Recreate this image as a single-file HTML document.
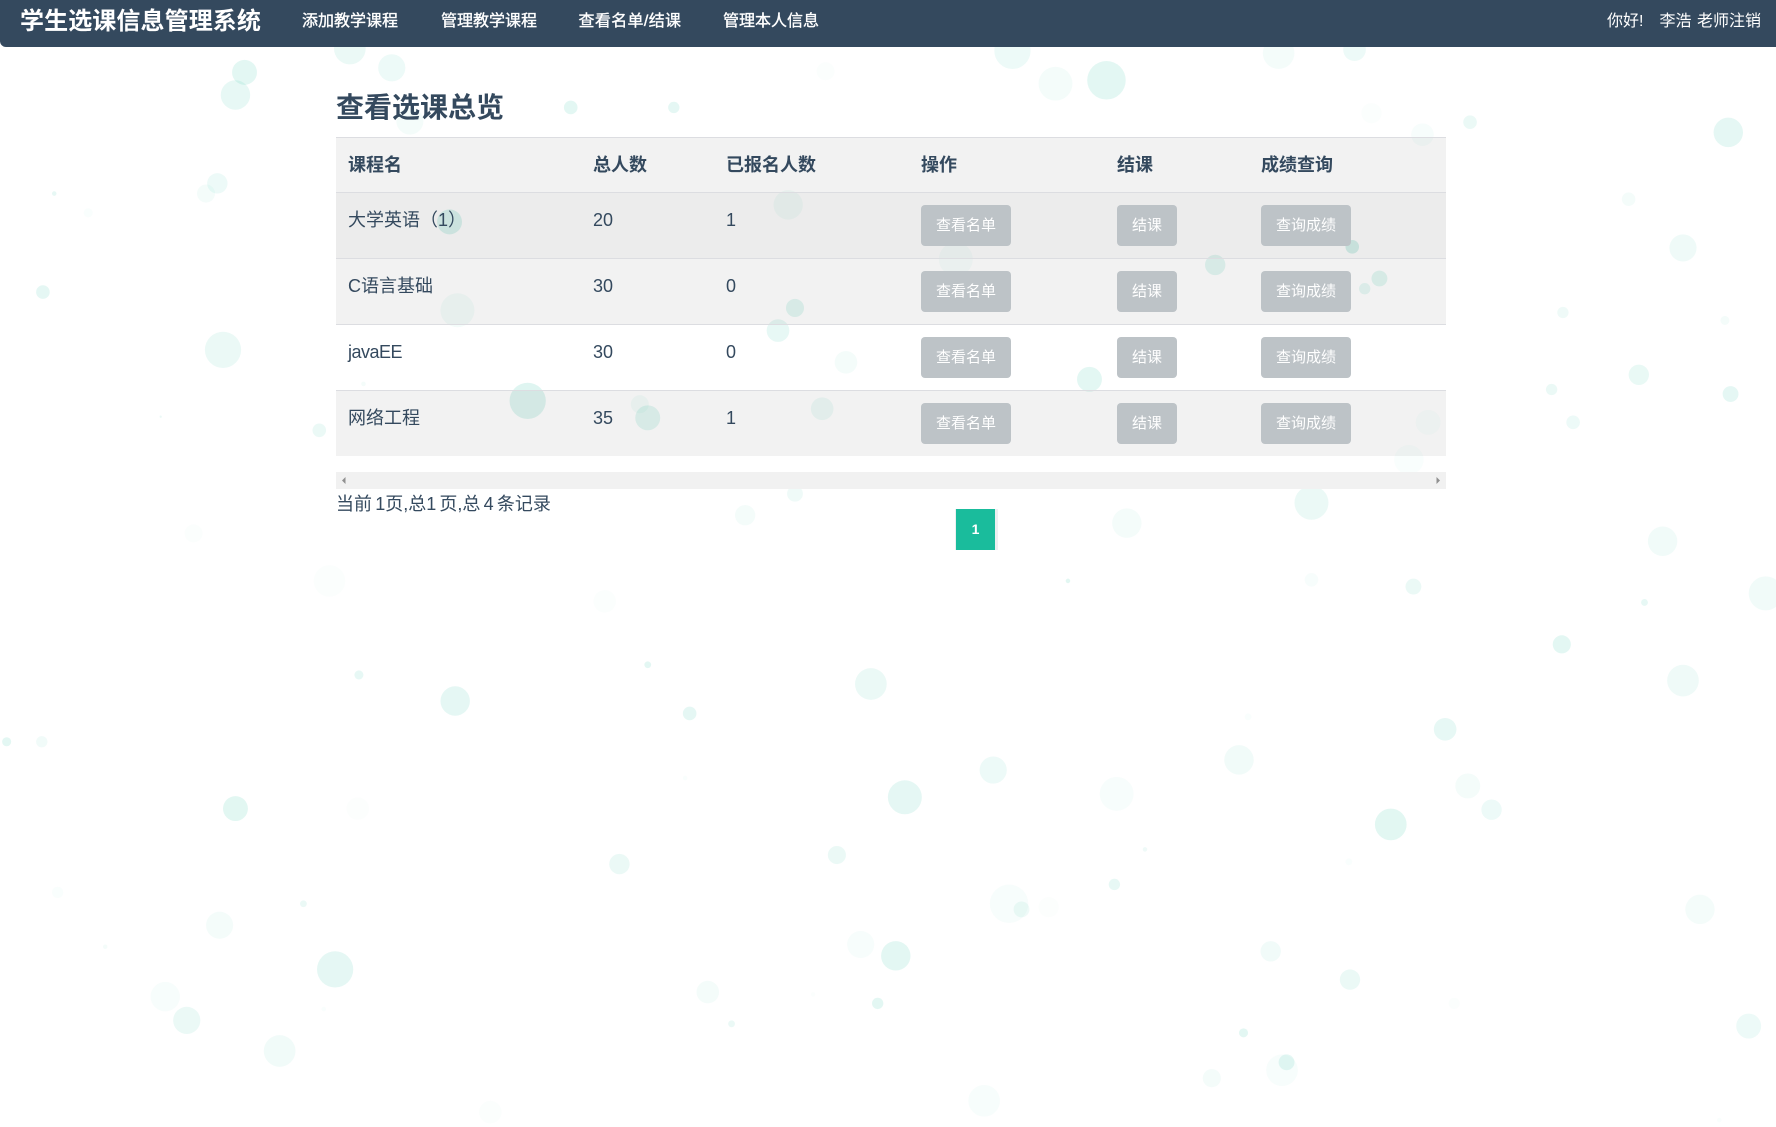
<!DOCTYPE html>
<html lang="zh"><head><meta charset="utf-8"><title>查看选课总览</title>
<style>
*{box-sizing:border-box}
html,body{margin:0;padding:0;width:1776px;height:1127px;overflow:hidden;background:#fff}
body{position:relative;font-family:"Liberation Sans","Noto Sans CJK SC",sans-serif;color:#34495e}
.a{position:absolute;white-space:nowrap}
#bg{position:absolute;left:.6px;top:.6px;width:1776px;height:1127px;opacity:.86}
nav{position:absolute;left:0;top:0;width:1776px;height:47px;background:#34495e;border-radius:0 0 0 6px;color:#fff}
nav .a{line-height:40px;top:0}
.l{font-size:16px;-webkit-text-stroke:.35px #fff}
.r{position:absolute;left:336px;width:1110px}
.t{font-size:18px;line-height:26px}
.h{font-size:18px;line-height:26px;font-weight:700}
.b{position:absolute;height:41px;background:#bdc3c7;color:#fff;border-radius:4px;font-size:15px;line-height:42px;text-align:center}
</style></head><body>
<svg id="bg" viewBox="0 0 1568 995" fill="#1abc9c">
<circle cx="308" cy="42" r="14" fill-opacity=".1"/><circle cx="345" cy="59" r="12" fill-opacity=".09"/><circle cx="215" cy="63" r="11" fill-opacity=".14"/><circle cx="207" cy="83" r="13" fill-opacity=".12"/><circle cx="361" cy="106" r="12" fill-opacity=".05"/><circle cx="503" cy="94" r="6" fill-opacity=".14"/><circle cx="594" cy="94" r="5" fill-opacity=".13"/><circle cx="728" cy="62" r="8" fill-opacity=".02"/><circle cx="893" cy="44" r="16" fill-opacity=".09"/><circle cx="931" cy="73" r="15" fill-opacity=".05"/><circle cx="976" cy="70" r="17" fill-opacity=".14"/><circle cx="1128" cy="46" r="14" fill-opacity=".05"/><circle cx="1195" cy="43" r="10" fill-opacity=".09"/><circle cx="1210" cy="99" r="9" fill-opacity=".02"/><circle cx="1255" cy="118" r="10" fill-opacity=".04"/><circle cx="1297" cy="107" r="6" fill-opacity=".1"/><circle cx="1525" cy="116" r="13" fill-opacity=".13"/><circle cx="1437" cy="175" r="6" fill-opacity=".05"/><circle cx="1485" cy="218" r="12" fill-opacity=".08"/><circle cx="191" cy="161" r="9" fill-opacity=".09"/><circle cx="181" cy="170" r="8" fill-opacity=".05"/><circle cx="47" cy="170" r="2" fill-opacity=".12"/><circle cx="77" cy="187" r="4" fill-opacity=".03"/><circle cx="37" cy="257" r="6" fill-opacity=".13"/><circle cx="695" cy="180" r="13" fill-opacity=".05"/><circle cx="396" cy="195" r="11" fill-opacity=".18"/><circle cx="843" cy="228" r="15" fill-opacity=".04"/><circle cx="403" cy="273" r="15" fill-opacity=".06"/><circle cx="1072" cy="233" r="9" fill-opacity=".14"/><circle cx="1193" cy="217" r="6" fill-opacity=".2"/><circle cx="1217" cy="245" r="7" fill-opacity=".15"/><circle cx="1204" cy="254" r="5" fill-opacity=".12"/><circle cx="701" cy="271" r="8" fill-opacity=".14"/><circle cx="686" cy="291" r="10" fill-opacity=".12"/><circle cx="196" cy="308" r="16" fill-opacity=".1"/><circle cx="746" cy="319" r="10" fill-opacity=".05"/><circle cx="961" cy="334" r="11" fill-opacity=".14"/><circle cx="1379" cy="275" r="5" fill-opacity=".08"/><circle cx="1522" cy="282" r="4" fill-opacity=".05"/><circle cx="1446" cy="330" r="9" fill-opacity=".11"/><circle cx="1369" cy="343" r="5" fill-opacity=".1"/><circle cx="1527" cy="347" r="7" fill-opacity=".13"/><circle cx="1388" cy="372" r="6" fill-opacity=".09"/><circle cx="320" cy="338" r="2" fill-opacity=".06"/><circle cx="141" cy="367" r="1" fill-opacity=".1"/><circle cx="465" cy="353" r="16" fill-opacity=".16"/><circle cx="564" cy="356" r="8" fill-opacity=".05"/><circle cx="571" cy="368" r="11" fill-opacity=".14"/><circle cx="725" cy="360" r="10" fill-opacity=".08"/><circle cx="281" cy="379" r="6" fill-opacity=".1"/><circle cx="1260" cy="372" r="11" fill-opacity=".03"/><circle cx="1243" cy="405" r="13" fill-opacity=".03"/><circle cx="701" cy="435" r="7" fill-opacity=".08"/><circle cx="1157" cy="443" r="15" fill-opacity=".1"/><circle cx="657" cy="454" r="9" fill-opacity=".05"/><circle cx="994" cy="461" r="13" fill-opacity=".05"/><circle cx="1467" cy="477" r="13" fill-opacity=".07"/><circle cx="170" cy="470" r="8" fill-opacity=".02"/>
<circle cx="1157" cy="511" r="6" fill-opacity=".04"/><circle cx="1247" cy="517" r="7" fill-opacity=".1"/><circle cx="1451" cy="531" r="3" fill-opacity=".12"/><circle cx="942" cy="512" r="2" fill-opacity=".15"/><circle cx="290" cy="512" r="14" fill-opacity=".02"/><circle cx="533" cy="530" r="10" fill-opacity=".02"/><circle cx="1558" cy="523" r="15" fill-opacity=".07"/><circle cx="1378" cy="568" r="8" fill-opacity=".14"/><circle cx="571" cy="586" r="3" fill-opacity=".14"/><circle cx="316" cy="595" r="4" fill-opacity=".12"/><circle cx="768" cy="603" r="14" fill-opacity=".1"/><circle cx="1485" cy="600" r="14" fill-opacity=".08"/><circle cx="401" cy="618" r="13" fill-opacity=".13"/><circle cx="608" cy="629" r="6" fill-opacity=".13"/><circle cx="1275" cy="643" r="10" fill-opacity=".12"/><circle cx="1101" cy="632" r="3" fill-opacity=".03"/><circle cx="5" cy="654" r="4" fill-opacity=".14"/><circle cx="36" cy="654" r="5" fill-opacity=".07"/><circle cx="1093" cy="670" r="13" fill-opacity=".07"/><circle cx="876" cy="679" r="12" fill-opacity=".09"/><circle cx="1295" cy="693" r="11" fill-opacity=".06"/><circle cx="1316" cy="714" r="9" fill-opacity=".09"/><circle cx="604" cy="686" r="2" fill-opacity=".03"/><circle cx="985" cy="700" r="15" fill-opacity=".04"/><circle cx="798" cy="703" r="15" fill-opacity=".13"/><circle cx="207" cy="713" r="11" fill-opacity=".15"/><circle cx="315" cy="713" r="10" fill-opacity=".015"/><circle cx="1227" cy="727" r="14" fill-opacity=".15"/><circle cx="738" cy="754" r="8" fill-opacity=".1"/><circle cx="546" cy="762" r="9" fill-opacity=".1"/><circle cx="1010" cy="749" r="2" fill-opacity=".08"/><circle cx="1190" cy="760" r="3" fill-opacity=".03"/><circle cx="983" cy="780" r="5" fill-opacity=".12"/><circle cx="50" cy="787" r="5" fill-opacity=".03"/><circle cx="890" cy="797" r="17" fill-opacity=".04"/><circle cx="901" cy="802" r="7" fill-opacity=".08"/><circle cx="925" cy="800" r="9" fill-opacity=".015"/><circle cx="1500" cy="802" r="13" fill-opacity=".05"/><circle cx="267" cy="797" r="3" fill-opacity=".1"/><circle cx="193" cy="816" r="12" fill-opacity=".05"/><circle cx="92" cy="835" r="2" fill-opacity=".05"/><circle cx="759" cy="833" r="12" fill-opacity=".04"/><circle cx="790" cy="843" r="13" fill-opacity=".14"/><circle cx="1121" cy="839" r="9" fill-opacity=".07"/><circle cx="295" cy="855" r="16" fill-opacity=".13"/><circle cx="1191" cy="864" r="9" fill-opacity=".1"/><circle cx="624" cy="875" r="10" fill-opacity=".05"/><circle cx="145" cy="879" r="13" fill-opacity=".04"/><circle cx="164" cy="900" r="12" fill-opacity=".1"/><circle cx="774" cy="885" r="5" fill-opacity=".14"/><circle cx="645" cy="903" r="3" fill-opacity=".1"/><circle cx="717" cy="877" r="2" fill-opacity=".02"/><circle cx="1283" cy="885" r="5" fill-opacity=".02"/><circle cx="285" cy="890" r="2" fill-opacity=".03"/><circle cx="1543" cy="905" r="11" fill-opacity=".09"/><circle cx="1097" cy="911" r="4" fill-opacity=".14"/><circle cx="246" cy="927" r="14" fill-opacity=".07"/><circle cx="1135" cy="937" r="7" fill-opacity=".13"/><circle cx="1131" cy="944" r="14" fill-opacity=".04"/><circle cx="1069" cy="951" r="8" fill-opacity=".06"/><circle cx="868" cy="971" r="14" fill-opacity=".04"/><circle cx="432" cy="981" r="10" fill-opacity=".02"/><circle cx="1517" cy="988" r="2" fill-opacity=".03"/>
</svg>

<div class="a" style="left:336px;top:87px;font-size:28px;line-height:42px;font-weight:700">查看选课总览</div>

<div class="r" style="top:137px;height:56px;background:rgba(0,0,0,.05);border-top:1px solid #dcdde1;border-bottom:1px solid #dcdde1"></div>
<div class="r" style="top:193px;height:66px;background:rgba(0,0,0,.075);border-bottom:1px solid #dcdde1"></div>
<div class="r" style="top:259px;height:66px;background:rgba(0,0,0,.05);border-bottom:1px solid #dcdde1"></div>
<div class="r" style="top:325px;height:66px;border-bottom:1px solid #dcdde1"></div>
<div class="r" style="top:391px;height:65px;background:rgba(0,0,0,.05)"></div>

<div class="a h" style="left:348px;top:152px">课程名</div>
<div class="a h" style="left:593px;top:152px">总人数</div>
<div class="a h" style="left:726px;top:152px">已报名人数</div>
<div class="a h" style="left:921px;top:152px">操作</div>
<div class="a h" style="left:1117px;top:152px">结课</div>
<div class="a h" style="left:1261px;top:152px">成绩查询</div>

<div class="a t" style="left:348px;top:207px">大学英语（1）</div>
<div class="a t" style="left:593px;top:207px">20</div>
<div class="a t" style="left:726px;top:207px">1</div>
<div class="b" style="left:921px;top:205px;width:90px">查看名单</div>
<div class="b" style="left:1117px;top:205px;width:60px">结课</div>
<div class="b" style="left:1261px;top:205px;width:90px">查询成绩</div>

<div class="a t" style="left:348px;top:273px">C语言基础</div>
<div class="a t" style="left:593px;top:273px">30</div>
<div class="a t" style="left:726px;top:273px">0</div>
<div class="b" style="left:921px;top:271px;width:90px">查看名单</div>
<div class="b" style="left:1117px;top:271px;width:60px">结课</div>
<div class="b" style="left:1261px;top:271px;width:90px">查询成绩</div>

<div class="a t" style="left:348px;top:339px;letter-spacing:-.5px">javaEE</div>
<div class="a t" style="left:593px;top:339px">30</div>
<div class="a t" style="left:726px;top:339px">0</div>
<div class="b" style="left:921px;top:337px;width:90px">查看名单</div>
<div class="b" style="left:1117px;top:337px;width:60px">结课</div>
<div class="b" style="left:1261px;top:337px;width:90px">查询成绩</div>

<div class="a t" style="left:348px;top:405px">网络工程</div>
<div class="a t" style="left:593px;top:405px">35</div>
<div class="a t" style="left:726px;top:405px">1</div>
<div class="b" style="left:921px;top:403px;width:90px">查看名单</div>
<div class="b" style="left:1117px;top:403px;width:60px">结课</div>
<div class="b" style="left:1261px;top:403px;width:90px">查询成绩</div>

<div class="r" style="top:472px;height:17px;background:#f1f1f1"></div>
<svg class="a" style="left:341px;top:476px" width="6" height="9"><path d="M4.5 1 L1 4.5 L4.5 8Z" fill="#909090"/></svg>
<svg class="a" style="left:1435px;top:476px" width="6" height="9"><path d="M1.5 1 L5 4.5 L1.5 8Z" fill="#909090"/></svg>

<div class="a" style="left:336px;top:491px;font-size:18px;line-height:26px;word-spacing:-1.8px">当前 1页,总1 页,总 4 条记录</div>

<div class="a" style="left:955px;top:509px;width:43px;height:41px;background:#ecf0f1"></div>
<div class="a" style="left:956px;top:509px;width:39px;height:41px;background:#1abc9c;color:#fff;font-size:14px;font-weight:700;line-height:41px;text-align:center">1</div>

<nav>
<div class="a" style="left:20px;top:2px;font-size:24px;font-weight:700;letter-spacing:.1px">学生选课信息管理系统</div>
<div class="a l" style="left:302px;top:1.5px">添加教学课程</div>
<div class="a l" style="left:441px;top:1.5px">管理教学课程</div>
<div class="a l" style="left:578.5px;top:1.5px;word-spacing:0;letter-spacing:.35px">查看名单/结课</div>
<div class="a l" style="left:723px;top:1.5px">管理本人信息</div>
<div class="a" style="left:1607px;top:1.5px;font-size:16px">你好!</div>
<div class="a" style="left:1659.5px;top:1.5px;font-size:16px">李浩</div>
<div class="a" style="left:1697px;top:1.5px;font-size:16px">老师注销</div>
</nav>
</body></html>
